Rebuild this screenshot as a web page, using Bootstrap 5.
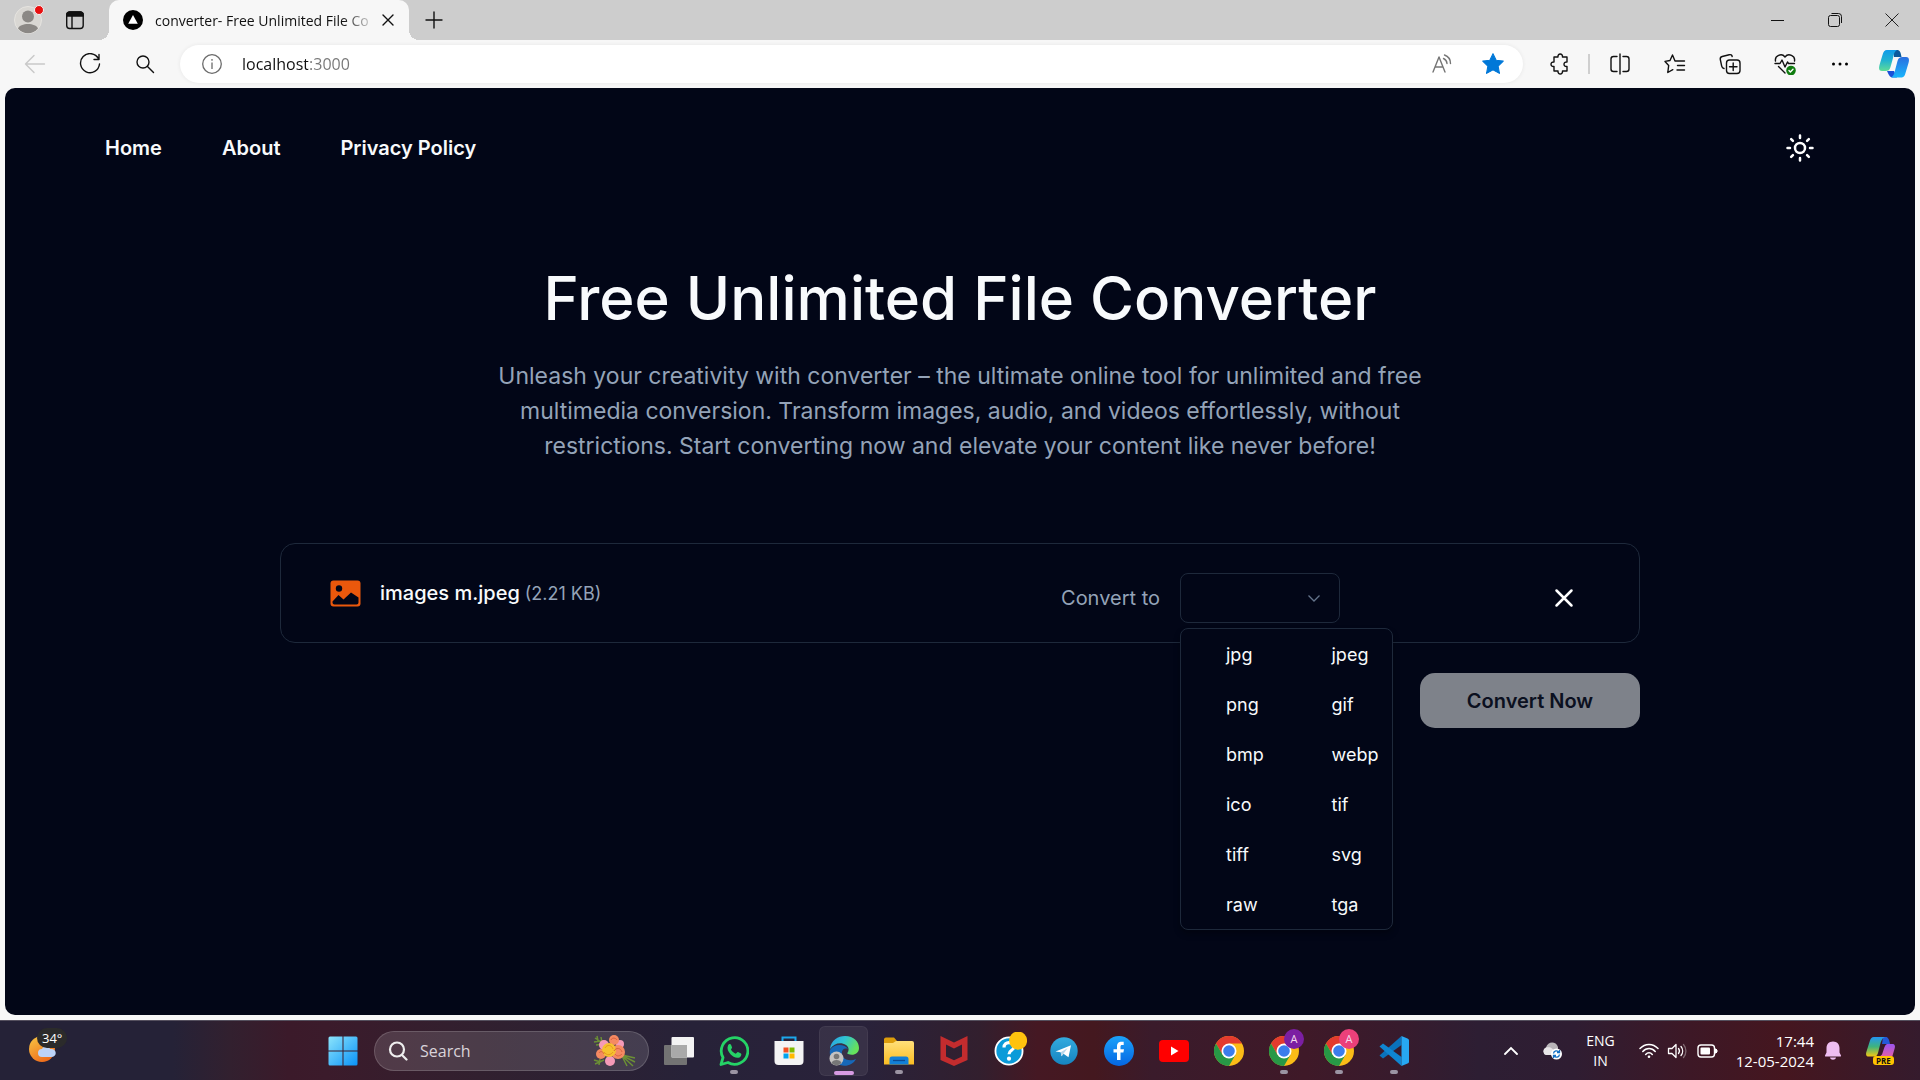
<!DOCTYPE html>
<html lang="en">
<head>
<meta charset="utf-8">
<meta name="viewport" content="width=device-width, initial-scale=1">
<title>converter- Free Unlimited File Converter</title>
<link href="https://cdn.jsdelivr.net/npm/bootstrap@5.3.0/dist/css/bootstrap.min.css" rel="stylesheet">
<style>
  :root { --edge: #1e293b; --page: #020617; --muted: #94a3b8; }
  body { background: #f7f7f7; font-family: "Open Sans", "Noto Sans", sans-serif; color: #111; }
  button, input { font-family: inherit; }
  svg { display: block; flex: none; }
  .plain { border: 0; background: none; padding: 0; color: inherit; display: flex; align-items: center; justify-content: center; }
  .line { fill: none; stroke: currentColor; stroke-width: 1.4; stroke-linecap: round; stroke-linejoin: round; }

  /* browser frame */
  .tabstrip { background: #cdcdcd; height: 40px; }
  .tab-tool { width: 50px; height: 40px; }
  .tab-tool-narrow { width: 42px; }
  .browser-tab { position: relative; background: #f7f7f7; width: 300px; margin-left: 13px; border-radius: 10px 10px 0 0; padding: 0 10px 0 14px; font-size: 14px; color: #111; }
  .browser-tab::before, .browser-tab::after { content: ""; position: absolute; bottom: 0; width: 10px; height: 10px; }
  .browser-tab::before { left: -10px; background: radial-gradient(circle at 0 0, #cdcdcd 10px, #f7f7f7 10px); }
  .browser-tab::after { right: -10px; background: radial-gradient(circle at 100% 0, #cdcdcd 10px, #f7f7f7 10px); }
  .tab-title { white-space: nowrap; -webkit-mask-image: linear-gradient(90deg, #000 88%, rgba(0,0,0,.2)); }
  .win-btn { width: 57px; height: 40px; }
  .toolbar { height: 48px; padding-left: 7px; }
  .tool { width: 55px; height: 46px; }
  .tool-end { width: 53px; }
  .address { background: #fff; height: 38px; border-radius: 19px; margin: 0 9px 0 8px; padding: 0 18px 0 22px; box-shadow: 0 0 4px rgba(0,0,0,.07); }
  .address input { border: 0; outline: 0; padding: 0; font-size: 16px; background: linear-gradient(90deg, #111 70px, #767676 70px); -webkit-background-clip: text; background-clip: text; color: transparent; }
  .rule { width: 2px; height: 20px; background: #cfcfcf; margin: 0 2px 0 1px; }

  /* site */
  .site { background: var(--page); color: #f8fafc; margin: 0 5px 5px; border-radius: 10px; font-family: Inter, sans-serif; }
  .site-nav { padding: 40px 100px; height: 120px; }
  .site-nav a { color: #f8fafc; font-size: 20px; font-weight: 600; line-height: 30px; text-decoration: none; }
  .nav-list { gap: 60px; }
  .hero { padding-top: 60px; }
  .hero h1 { font-size: 60px; line-height: 60px; font-weight: 500; margin-bottom: 31px; }
  .hero p { font-size: 23px; line-height: 35px; color: var(--muted); max-width: 940px; margin: 0 auto 79px; }
  .converter { max-width: 1360px; width: 100%; }
  .file-row { border: 1px solid var(--edge); border-radius: 15px; height: 100px; padding: 0 50px 0 49px; }
  .file-name { font-size: 20px; font-weight: 500; margin-left: 19px; }
  .file-size { font-size: 18px; color: var(--muted); margin-left: 5px; }
  .convert-side { padding-top: 29px; }
  .convert-side label { font-size: 20px; color: var(--muted); line-height: 50px; margin-right: 20px; }
  .format-select { width: 160px; height: 50px; border: 1px solid var(--edge); border-radius: 8px; background: var(--page); appearance: none; color: #f8fafc; }
  .select-arrow { position: absolute; right: 18px; top: 17px; color: #64748b; pointer-events: none; }
  .format-menu { position: absolute; top: 55px; left: 0; width: 213px; z-index: 5; background: var(--page); border: 1px solid var(--edge); border-radius: 8px; display: grid; grid-template-columns: 1fr 1fr; padding: 0; box-shadow: 0 4px 6px rgba(0,0,0,.3); }
  .format-menu button { height: 50px; justify-content: flex-start; padding-left: 45px; font-size: 18px; color: #f8fafc; }
  .remove { width: 50px; height: 50px; margin-left: 199px; }
  .convert-now { height: 55px; width: 220px; border: 0; border-radius: 15px; background: #7e828a; color: #0b1020; font-size: 20px; font-weight: 600; margin-top: 30px; }

  /* taskbar */
  .taskbar { height: 60px; color: #fff; border-top: 1px solid #55505e;
    background: linear-gradient(90deg, #252237 0, #252237 9%, #32202f 12%, #3b1a2a 15%, #3b1b2b 17%, #31202f 25%, #272238 36%, #29223a 45%, #321f2e 51%, #451823 54%, #44181f 57%, #3a1b2b 60%, #3f1928 68%, #371b2d 73%, #2d1e33 77%, #2f1d32 82%, #3d1826 88%, #45161f 93%, #351b2d 100%); }
  .weather { width: 315px; padding: 4px 0 0 28px; }
  .temp { position: absolute; left: 9px; top: -8px; background: #2b2b2b; border-radius: 10px; font-size: 13px; line-height: 20px; padding: 0 5px; color: #fff; }
  .app { position: relative; width: 55px; height: 59px; }
  .app.running::after { content: ""; position: absolute; left: 24px; bottom: 6px; width: 8px; height: 4px; border-radius: 2px; background: #9b94a3; }
  .app.active { width: 49px; height: 50px; margin: 0 3px; border-radius: 6px; background: rgba(255,255,255,.07); box-shadow: inset 0 0 0 1px rgba(255,255,255,.05); }
  .app.active::after { left: 15px; width: 20px; bottom: 1px; background: #d79be3; }
  .task-search { height: 40px; width: 275px; border-radius: 20px; background: rgba(255,255,255,.13); border: 1px solid rgba(255,255,255,.16); padding: 0 12px 0 13px; margin: 0 2px 0 4px; }
  .task-search input { border: 0; outline: 0; background: none; color: #fff; font-size: 16px; padding: 0; margin-left: 12px; min-width: 0; }
  .task-search input::placeholder { color: #d9d3da; opacity: 1; }
  .tray { font-size: 14px; line-height: 20px; padding-right: 24px; }
  .clock { font-size: 15px; margin-left: 18px; }
  .initial { position: absolute; left: 28px; top: 8px; width: 20px; height: 20px; border-radius: 10px; color: #f3d9ee; font-size: 11px; line-height: 20px; text-align: center; }
  .pre-tag { position: absolute; left: 7px; top: 19px; background: #ffc400; color: #111; border-radius: 3px; font-size: 8px; line-height: 9px; font-weight: 700; padding: 0 3px; }
</style>
<script src="https://cdn.jsdelivr.net/npm/bootstrap@5.3.0/dist/js/bootstrap.bundle.min.js"></script>
</head>
<body class="d-flex flex-column min-vh-100">

<svg width="0" height="0" class="position-absolute" aria-hidden="true">
  <defs>
    <linearGradient id="cpA" x1="0" y1="0" x2="0" y2="1"><stop offset="0" stop-color="#0f9bea"/><stop offset=".5" stop-color="#22b3d0"/><stop offset="1" stop-color="#5fdc98"/></linearGradient>
    <linearGradient id="cpB" x1="0" y1="0" x2="0" y2="1"><stop offset="0" stop-color="#2a6fe0"/><stop offset="1" stop-color="#19b5fb"/></linearGradient>
    <linearGradient id="cpC" x1="0" y1="0" x2="0" y2="1"><stop offset="0" stop-color="#2396f2"/><stop offset=".5" stop-color="#3fb47c"/><stop offset="1" stop-color="#f4c813"/></linearGradient>
    <linearGradient id="cpD" x1="0" y1="0" x2="0" y2="1"><stop offset="0" stop-color="#9a55f0"/><stop offset="1" stop-color="#f0609a"/></linearGradient>
    <linearGradient id="win" x1="0" y1="0" x2="1" y2="1"><stop offset="0" stop-color="#8ce4fb"/><stop offset="1" stop-color="#0a93f8"/></linearGradient>
    <linearGradient id="moon" x1="0" y1="0" x2=".6" y2="1"><stop offset="0" stop-color="#f6c844"/><stop offset="1" stop-color="#ee6c1b"/></linearGradient>
    <linearGradient id="edgeTop" x1="0" y1="0" x2="1" y2=".4"><stop offset="0" stop-color="#2a9fe6"/><stop offset=".5" stop-color="#2fc4d2"/><stop offset="1" stop-color="#66e25c"/></linearGradient>
    <linearGradient id="folder" x1="0" y1="0" x2="0" y2="1"><stop offset="0" stop-color="#ffe07a"/><stop offset="1" stop-color="#fbbd22"/></linearGradient>
    <linearGradient id="tg" x1="0" y1="0" x2="0" y2="1"><stop offset="0" stop-color="#33abdf"/><stop offset="1" stop-color="#1684c0"/></linearGradient>
    <linearGradient id="fb" x1="0" y1="0" x2="0" y2="1"><stop offset="0" stop-color="#1ba2fa"/><stop offset="1" stop-color="#0566e2"/></linearGradient>
    <symbol id="chrome" viewBox="0 0 30 30">
      <circle cx="15" cy="15" r="15" fill="#fbbc17"/>
      <path d="M15 7.500H28A15 15 0 0 0 2 7.500L8.500 18.700z" fill="#e33b2e"/>
      <path d="M2 7.500A15 15 0 0 0 15 30L21.500 18.800 8.500 18.800z" fill="#279846"/>
      <circle cx="15" cy="15" r="7.500" fill="#fff"/><circle cx="15" cy="15" r="5.800" fill="#3b7ded"/>
    </symbol>
  </defs>
</svg>

<header>
  <div class="tabstrip d-flex">
    <button class="plain tab-tool ms-1" aria-label="Profile">
      <svg width="32" height="32" viewBox="0 0 32 32"><circle cx="15" cy="16" r="13.500" fill="#d9d7d3" stroke="#e6e4e0"/><circle cx="15" cy="12.500" r="6" fill="#8b8885"/><path d="M5 24.500c2-6 18-6 20 0a13 13 0 0 1-20 0z" fill="#8b8885"/><circle cx="26" cy="6" r="4.500" fill="#e81010" stroke="#f3f3f3"/></svg>
    </button>
    <button class="plain tab-tool tab-tool-narrow" aria-label="Workspaces">
      <svg width="20" height="20" viewBox="0 0 20 20" class="line"><rect x="1.700" y="2" width="16.500" height="16.500" rx="3"/><path d="M2 3.500 4 2h12l2 1.500V6H2z" fill="currentColor"/><path d="M7 6v12"/></svg>
    </button>
    <div class="browser-tab d-flex align-items-center">
      <svg width="20" height="20" viewBox="0 0 20 20" class="me-2"><circle cx="10" cy="10" r="10"/><path d="M10 5 14.800 13.800H5.200z" fill="#fff"/></svg>
      <span class="tab-title ps-1">converter- Free Unlimited File Co</span>
      <button class="plain ms-auto me-1" aria-label="Close tab"><svg width="14" height="14" viewBox="0 0 14 14" class="line"><path d="m2 2 10 10M12 2 2 12"/></svg></button>
    </div>
    <button class="plain tab-tool" aria-label="New tab"><svg width="18" height="18" viewBox="0 0 18 18" class="line"><path d="M9 1v16M1 9h16"/></svg></button>
    <div class="d-flex ms-auto">
      <button class="plain win-btn" aria-label="Minimize"><svg width="14" height="14" viewBox="0 0 14 14"><path d="M0 7.500h13" stroke="#111"/></svg></button>
      <button class="plain win-btn" aria-label="Restore"><svg width="14" height="14" viewBox="0 0 14 14" fill="none" stroke="#111"><rect x=".5" y="2.500" width="11" height="11" rx="2"/><path d="M3.500.5h7a3 3 0 0 1 3 3V10"/></svg></button>
      <button class="plain win-btn" aria-label="Close window"><svg width="14" height="14" viewBox="0 0 14 14" fill="none" stroke="#222"><path d="m.5.5 13 13M13.500.5l-13 13"/></svg></button>
    </div>
  </div>

  <div class="toolbar d-flex align-items-center">
    <button class="plain tool" aria-label="Back"><svg width="22" height="20" viewBox="0 0 22 20" class="line" style="color:#c9c9c9"><path d="M20.500 10H1.500M10 1.500 1.500 10l8.500 8.500"/></svg></button>
    <button class="plain tool" aria-label="Refresh"><svg width="22" height="22" viewBox="0 0 22 22" class="line"><path d="M19.500 5.800A9.500 9.500 0 1 0 20.500 11M20 1.500v5h-5"/></svg></button>
    <button class="plain tool" aria-label="Search"><svg width="20" height="20" viewBox="0 0 20 20" class="line"><circle cx="8" cy="8" r="6"/><path d="m12.500 12.500 6 6"/></svg></button>
    <div class="address d-flex align-items-center flex-grow-1">
      <svg width="20" height="20" viewBox="0 0 20 20" fill="none" stroke="#6b6b6b" stroke-width="1.300"><circle cx="10" cy="10" r="9.300"/><path d="M10 8.500V15M10 5v1.800"/></svg>
      <input type="text" class="flex-grow-1 ms-3 ps-1" value="localhost:3000" aria-label="Address">
      <button class="plain me-4" aria-label="Read aloud"><svg width="22" height="20" viewBox="0 0 22 20" class="line" style="color:#757575"><path d="m2 18 6-15 6 15M4 13h8M12.500 4.500a6 6 0 0 1 3.500 5M13.500 1a9 9 0 0 1 6 8.500"/></svg></button>
      <button class="plain ms-1" aria-label="Favorite"><svg width="24" height="24" viewBox="0 0 22 22"><path d="m11 1.500 2.900 6 6.500.9-4.700 4.600 1.200 6.600L11 16.400l-5.900 3.200L6.300 13 1.600 8.400l6.500-.9z" fill="#0078d8" stroke="#0078d8" stroke-width="1" stroke-linejoin="round"/></svg></button>
    </div>
    <button class="plain tool" aria-label="Extensions"><svg width="22" height="22" viewBox="0 0 22 22" class="line"><path d="M5 4h4c-.6-4 5-4 4.500 0H18v5c-4-.6-4 5 0 4.500V18h-4.500c.5 4-5 4-4.500 0H5v-4.500c-4 .5-4-5 0-4.500z"/></svg></button>
    <span class="rule"></span>
    <button class="plain tool" aria-label="Split screen"><svg width="22" height="22" viewBox="0 0 22 22" class="line"><path d="M8 3.500H4.500a2.500 2.500 0 0 0-2.500 2.500v10a2.500 2.500 0 0 0 2.500 2.500H8M14 3.500h3.500a2.500 2.500 0 0 1 2.500 2.500v10a2.500 2.500 0 0 1-2.500 2.500H14M11 1v20"/></svg></button>
    <button class="plain tool" aria-label="Favorites"><svg width="22" height="22" viewBox="0 0 22 22" class="line"><path d="M11 8 8.500 2 6 7.500l-5 .9 3.700 4-.9 7.100 5-2.800M11 8h9.500M13.500 12.500h7M13 17h7.500"/></svg></button>
    <button class="plain tool" aria-label="Collections"><svg width="22" height="22" viewBox="0 0 22 22" class="line"><path d="M5 15.500c-1.500-.3-2-1-2.300-2.300L1.300 6.500C1 4.800 1.800 3.900 3.200 3.500l7-1.800c1.600-.4 2.700.3 3 1.800"/><rect x="7.500" y="7" width="13.500" height="13.500" rx="3"/><path d="M14.200 10v7.500M10.500 13.700H18"/></svg></button>
    <button class="plain tool" aria-label="Browser essentials"><svg width="22" height="22" viewBox="0 0 22 22" class="line"><path d="M1.500 8C.5 3 7.500-.5 11 4c3.500-4.500 10.500-1 9.500 4M1 10.500h5l2-3.500 3 7 2.500-5 1 1.500h6M4.500 13.500 11 20"/><circle cx="17" cy="17.500" r="4.800" fill="#107c10" stroke="none"/><path d="m15 17.500 1.400 1.400 2.600-2.700" stroke="#fff"/></svg></button>
    <button class="plain tool" aria-label="Settings and more"><svg width="18" height="18" viewBox="0 0 18 18"><circle cx="2.500" cy="9" r="1.500"/><circle cx="9" cy="9" r="1.500"/><circle cx="15.500" cy="9" r="1.500"/></svg></button>
    <button class="plain tool tool-end" aria-label="Copilot"><svg width="30" height="28" viewBox="0 0 30 28"><path d="M14 0h4c3 0 3.500 2 4.500 7H15z" fill="#0b5a9c"/><path d="M8 21h7l3 6.500h-4c-3 0-4-2-6-6.500z" fill="#1a50d8"/><path d="M8 0h10c-2 1-3 3-4 8l-2.500 9c-1 3-2 4-5 4H3c-3 0-3.500-2-2.500-6L3.500 5C4.500 1.500 5.500 0 8 0z" fill="url(#cpA)"/><path d="M22 27.500H12c2-1 3-3 4-7L18.500 11c1-3 2-4 5-4H27c3 0 3.500 2 2.500 6l-3 10c-1 3.500-2 4.500-4.500 4.500z" fill="url(#cpB)"/></svg></button>
  </div>
</header>

<main class="site flex-grow-1">
  <nav class="site-nav d-flex align-items-center justify-content-between">
    <div class="nav-list d-flex"><a href="#">Home</a><a href="#">About</a><a href="#">Privacy Policy</a></div>
    <button class="plain" aria-label="Toggle theme"><svg width="30" height="30" viewBox="0 0 24 24" fill="none" stroke="#fff" stroke-width="2" stroke-linecap="round"><circle cx="12" cy="12" r="4"/><path d="M12 2v2M12 20v2M4.930 4.930l1.410 1.410M17.660 17.660l1.410 1.410M2 12h2M20 12h2M6.340 17.660l-1.410 1.410M19.070 4.930l-1.410 1.410"/></svg></button>
  </nav>

  <section class="hero text-center">
    <h1>Free Unlimited File Converter</h1>
    <p>Unleash your creativity with converter – the ultimate online tool for unlimited and free multimedia conversion. Transform images, audio, and videos effortlessly, without restrictions. Start converting now and elevate your content like never before!</p>
  </section>

  <section class="converter mx-auto">
    <div class="file-row d-flex">
      <div class="d-flex align-items-center">
        <svg width="31" height="27" viewBox="0 0 31 27"><rect x=".5" y=".5" width="30" height="26" rx="3" fill="#ea580c"/><circle cx="9" cy="8.500" r="3.200" fill="#020617"/><path d="M2.500 21.500 8.500 15l5 4.500 7.500-7 7.500 5V22.500a2 2 0 0 1-2 2h-22a2 2 0 0 1-2-2z" fill="#020617"/></svg>
        <span class="file-name">images m.jpeg</span><span class="file-size">(2.21 KB)</span>
      </div>
      <div class="convert-side d-flex ms-auto align-items-start">
        <label for="format">Convert to</label>
        <div class="position-relative">
          <select id="format" class="format-select"><option></option></select>
          <svg class="select-arrow" width="16" height="16" viewBox="0 0 16 16" fill="none" stroke="currentColor" stroke-width="1.300"><path d="m2.500 5.500 5.500 5.500 5.500-5.500"/></svg>
          <div class="format-menu" role="listbox" aria-label="Formats">
            <button class="plain" role="option">jpg</button><button class="plain" role="option">jpeg</button>
            <button class="plain" role="option">png</button><button class="plain" role="option">gif</button>
            <button class="plain" role="option">bmp</button><button class="plain" role="option">webp</button>
            <button class="plain" role="option">ico</button><button class="plain" role="option">tif</button>
            <button class="plain" role="option">tiff</button><button class="plain" role="option">svg</button>
            <button class="plain" role="option">raw</button><button class="plain" role="option">tga</button>
          </div>
        </div>
        <button class="plain remove" aria-label="Remove file"><svg width="20" height="20" viewBox="0 0 20 20" fill="none" stroke="#fff" stroke-width="2.500" stroke-linecap="round"><path d="m2.500 2.500 15 15M17.500 2.500l-15 15"/></svg></button>
      </div>
    </div>
    <div class="d-flex justify-content-end"><button class="convert-now">Convert Now</button></div>
  </section>
</main>

<footer class="taskbar d-flex align-items-center">
  <div class="weather">
    <div class="position-relative d-inline-block">
      <svg width="30" height="28" viewBox="0 0 30 28"><circle cx="14" cy="13" r="13" fill="url(#moon)"/><path d="M14 21a4 4 0 0 1 0-8c2-4 7-3 8 0 7-1 8 8 1 8z" fill="#bcd3f7"/></svg>
      <span class="temp">34°</span>
    </div>
  </div>
  <button class="plain app" aria-label="Start"><svg width="30" height="30" viewBox="0 0 30 30"><path d="M2 .5h12.500v14H.5V2A1.500 1.500 0 0 1 2 .5zm13.500 0H28A1.500 1.500 0 0 1 29.500 2v12.500h-14zM.5 15.500h14v14H2A1.500 1.500 0 0 1 .5 28zm15 0h14V28a1.500 1.500 0 0 1-1.500 1.500H15.500z" fill="url(#win)"/></svg></button>
  <div class="task-search d-flex align-items-center">
    <svg width="20" height="20" viewBox="0 0 20 20" fill="none" stroke="#eee" stroke-width="2.200" stroke-linecap="round"><circle cx="9" cy="8.500" r="7"/><path d="m14 14 4.500 4.500"/></svg>
    <input type="search" class="flex-grow-1" placeholder="Search" aria-label="Search">
    <svg width="44" height="34" viewBox="0 0 44 34"><g stroke="#6b8f35" stroke-width="1.500" fill="none"><path d="M3 4l9 6M5 2l1 5M9 3l1 6M2 8l7-1M4 11l8-1M3 30l9-4M2 26l7 2M7 31l1-6M28 20l13 12M30 21l13 3M29 21l14 7M30 22l5 10"/></g><g fill="#f59ab8"><circle cx="12" cy="11" r="5"/><circle cx="18" cy="27" r="5"/><circle cx="28" cy="10" r="4"/></g><g fill="#f58a62"><circle cx="22" cy="6" r="5"/><circle cx="26" cy="18" r="7"/><circle cx="9" cy="20" r="5"/></g><circle cx="17" cy="16" r="7" fill="#f6c12f"/><path d="M13 14c2-4 7-3 8 1M12 18c3 4 7 3 9 0" stroke="#e69a20" fill="none"/><path d="M22 17c2-4 7-3 8 1M23 20c2 3 5 2 7 0M7 19c1-2 4-2 5 1M19 6c1-3 5-2 6 0" stroke="#d9603f" fill="none"/></svg>
  </div>
  <button class="plain app" aria-label="Task view"><svg width="30" height="28" viewBox="0 0 30 28"><rect x="0" y="8" width="23" height="20" rx="1" fill="#737373"/><rect x="7.500" y="0" width="22.500" height="20.500" rx="1" fill="#f3f3f3"/><path d="M7.500 8H23v12.500H7.500z" fill="#a9a9a9"/></svg></button>
  <button class="plain app running" aria-label="WhatsApp"><svg width="30" height="30" viewBox="0 0 30 30"><path d="M2 28.500 4 21.500A13.300 13.300 0 1 1 9 26.500z" fill="none" stroke="#25d366" stroke-width="2.800" stroke-linejoin="round"/><path d="M9 9.500c1-2 2.500-1.800 3-.8l1 2.500c.3.800-1 1.800-1 2.300 1 2 2.800 3.500 4.800 4.200.7 0 1.500-1.800 2.200-1.600l3 1.500c.8.400.3 3-1.500 3.800-3 1.500-7-1-9-3.200-2.500-2.800-3.800-5.700-2.500-8.700z" fill="#25d366"/></svg></button>
  <button class="plain app" aria-label="Microsoft Store"><svg width="30" height="30" viewBox="0 0 30 30"><path d="M8.500 6V1.500h13V6" fill="none" stroke="#1ca7ec" stroke-width="2"/><path d="M.5 5h29v20a4 4 0 0 1-4 4h-21a4 4 0 0 1-4-4z" fill="#f4f4f4"/><path d="M9.500 11.500h5v5h-5z" fill="#f25022"/><path d="M15.500 11.500h5v5h-5z" fill="#7fba00"/><path d="M9.500 17.500h5v5h-5z" fill="#00a4ef"/><path d="M15.500 17.500h5v5h-5z" fill="#ffb900"/></svg></button>
  <button class="plain app running active" aria-label="Microsoft Edge"><svg width="32" height="30" viewBox="0 0 32 30"><path d="M2 14c4-7 15-6 18-1-5-2-8 3-5 8 3 4 9 4 13 2-3 6-10 8-16 6C4 27 1 21 2 14z" fill="#1668b8"/><path d="M2 13C3 4 10 0 17 0c9 0 14 6 14 12 0 6-6 8-11 6-1-.5-1-1 0-2 1-2 1-5-2-7-5-3-12-2-16 4z" fill="url(#edgeTop)"/><circle cx="8.500" cy="22.500" r="7" fill="#c4c2c0"/><circle cx="8.500" cy="20.500" r="2.800" fill="#777"/><path d="M3.500 27c1-4 9-4 10 0-3 3-7 3-10 0z" fill="#777"/></svg></button>
  <button class="plain app running" aria-label="File Explorer"><svg width="30" height="28" viewBox="0 0 30 28"><path d="M0 2A2 2 0 0 1 2 .5h8L13 4v5H0z" fill="#dd9d0b"/><path d="M0 6h9l3-2h16a2 2 0 0 1 2 2v21.500H0z" fill="url(#folder)"/><path d="M5.500 27.500V22a2.500 2.500 0 0 1 2.500-2.500h14a2.500 2.500 0 0 1 2.500 2.500v5.500z" fill="#1280d8"/><path d="M9 23.500h12" stroke="#0a4a94" stroke-width="1.300"/></svg></button>
  <button class="plain app" aria-label="McAfee"><svg width="28" height="30" viewBox="0 0 28 30"><path d="M.5 0 14 6.500 27.500 0v24L14 30 .5 24zM6 8.500v12l8 3.700 8-3.700v-12l-8 4z" fill="#c32c2e" fill-rule="evenodd"/></svg></button>
  <button class="plain app" aria-label="Help"><svg width="36" height="38" viewBox="0 0 36 42"><circle cx="18" cy="21" r="15" fill="#0b9bd9" stroke="#fff" stroke-width="2"/><path d="M12.500 17c0-7 11-7 11-.5 0 4-5.500 3.500-5.500 8" fill="none" stroke="#fff" stroke-width="3.500"/><circle cx="18" cy="29.500" r="2.300" fill="#fff"/><circle cx="28" cy="9.500" r="10" fill="#ffc20e"/></svg></button>
  <button class="plain app" aria-label="Telegram"><svg width="28" height="28" viewBox="0 0 28 28"><circle cx="14" cy="14" r="13.700" fill="url(#tg)"/><path d="M5.500 14.500 21 8.300l-2.500 12-5-3.500-2 2.500-.8-4z" fill="#fff"/><path d="m10.700 15.300 7-4.300-4.200 5.800-2 2.500z" fill="#b8d7ea"/></svg></button>
  <button class="plain app" aria-label="Facebook"><svg width="30" height="30" viewBox="0 0 30 30"><circle cx="15" cy="15" r="15" fill="url(#fb)"/><path d="M13 24v-7.500H9.500v-3.300H13V10.500C13 7 15 5.800 17.500 5.800h2.200V9h-1.600c-1.200 0-1.600.6-1.600 1.700v2.500H20l-.6 3.300h-2.900V24z" fill="#fff"/></svg></button>
  <button class="plain app" aria-label="YouTube"><svg width="30" height="22" viewBox="0 0 30 22"><rect width="30" height="22" rx="4" fill="#f00"/><path d="m12 6.500 7.500 4.500-7.500 4.500z" fill="#fff"/></svg></button>
  <button class="plain app" aria-label="Chrome"><svg width="30" height="30"><use href="#chrome"/></svg></button>
  <button class="plain app running" aria-label="Chrome profile 1"><svg width="30" height="30"><use href="#chrome"/></svg><span class="initial" style="background:#7b1fa2">A</span></button>
  <button class="plain app running" aria-label="Chrome profile 2"><svg width="30" height="30"><use href="#chrome"/></svg><span class="initial" style="background:#ec407a">A</span></button>
  <button class="plain app running" aria-label="Visual Studio Code"><svg width="30" height="30" viewBox="0 0 30 30"><path d="M22.500 0v9L4 22.500l-3.500-3z" fill="#0a72bc"/><path d="M22.500 30v-9L4 7.500l-3.500 3z" fill="#0f85d1"/><path d="m22.500 0 6 2.500A2 2 0 0 1 30 4.500v21a2 2 0 0 1-1.500 2L22.500 30z" fill="#27a8f2"/></svg></button>

  <div class="tray d-flex align-items-center ms-auto">
    <button class="plain" aria-label="Show hidden icons"><svg width="14" height="10" viewBox="0 0 14 10" fill="none" stroke="#fff" stroke-width="1.800" stroke-linecap="round"><path d="m1 8 6-6 6 6"/></svg></button>
    <svg class="ms-4" width="20" height="18" viewBox="0 0 20 18"><path d="M4 13a4 4 0 0 1 0-7.500C6-1 14-1 16 5v8z" fill="#b9b5b9"/><path d="M4 13a4 4 0 0 1 0-7.500c5-1 6 1 11 5.500V13z" fill="#e8e6e8"/><circle cx="14.500" cy="12" r="5.500" fill="#fff"/><path d="M11.500 11.500a3 3 0 0 1 5.500-1.300M17.500 12.500a3 3 0 0 1-5.500 1.300M17.500 8v2.500H15M11.500 16v-2.500H14" fill="none" stroke="#1370c4" stroke-width="1.300"/></svg>
    <div class="text-center ms-4">ENG<br>IN</div>
    <svg class="ms-4" width="20" height="16" viewBox="0 0 20 16" fill="none" stroke="#fff" stroke-width="1.500" stroke-linecap="round"><path d="M1 5.500c5-5.500 13-5.500 18 0M3.800 8.500c3.500-4 9-4 12.400 0M6.700 11.500c2-2.300 4.700-2.300 6.600 0"/><circle cx="10" cy="13.800" r="1.300" fill="#fff" stroke="none"/></svg>
    <svg class="ms-2" width="22" height="18" viewBox="0 0 22 18" fill="none" stroke="#fff" stroke-width="1.300" stroke-linecap="round" stroke-linejoin="round"><path d="M1.500 6.500H5l4-4v13l-4-4H1.500zM11.500 6.500a4 4 0 0 1 0 5M14 4.500a7 7 0 0 1 0 9"/><path d="M16.500 2.500a10 10 0 0 1 0 13" stroke="#7f6870"/></svg>
    <svg class="ms-2" width="21" height="14" viewBox="0 0 21 14"><rect x="1" y="1" width="16.500" height="12" rx="3" fill="none" stroke="#fff" stroke-width="1.400"/><rect x="3.500" y="3.500" width="9.500" height="7" rx="1" fill="#fff"/><path d="M18 5h1l1 1v2l-1 1h-1z" fill="#fff" stroke="#fff"/></svg>
    <div class="clock text-end">17:44<br>12-05-2024</div>
    <svg class="me-4" style="margin-left:10px" width="18" height="20" viewBox="0 0 18 20"><path d="M9 .5c4 0 6.500 2.800 6.500 6.500v4.500l1.500 3c.2.700-.1 1-.7 1H1.700c-.6 0-.9-.3-.7-1l1.500-3V7C2.500 3.300 5 .5 9 .5zM6 16.500h6c-.5 3-5.500 3-6 0z" fill="#eebdf0"/></svg>
    <div class="position-relative">
      <svg width="30" height="28" viewBox="0 0 30 28"><path d="M17 0h3c2 0 3 2 4 7h-8z" fill="#2459d8"/><path d="M8 0h11c-3 1-4 4-5 8l-2 8c-1 3-2 3.500-5 3.500H3c-3 0-3.500-2-2.500-5L3.500 5C4.500 1.500 5.500 0 8 0z" fill="url(#cpC)"/><path d="M11 22l5-4.500L18.500 10c1-2.500 2-3 4-3H26c3 0 3.500 2 2.500 5l-3 10z" fill="url(#cpD)"/></svg>
      <span class="pre-tag">PRE</span>
    </div>
  </div>
</footer>
</body>
</html>
